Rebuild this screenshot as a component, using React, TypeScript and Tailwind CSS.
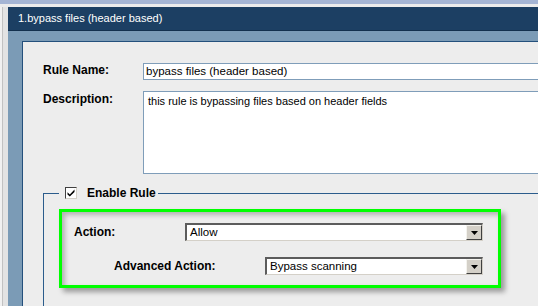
import React from 'react';

const font = "font-['Liberation_Sans',Arial,sans-serif]";

const DropArrow: React.FC = () => (
  <div className="flex h-full w-[16px] shrink-0 items-center justify-center border-t border-l border-b border-r border-t-[#f4f3ee] border-l-[#f4f3ee] border-b-[#404040] border-r-[#404040] bg-[#d4d0c8]">
    <svg width="7" height="4" viewBox="0 0 7 4">
      <path d="M0 0h7L3.5 4z" fill="#000" />
    </svg>
  </div>
);

const Combo: React.FC<{ value: string }> = ({ value }) => (
  <div className="flex h-[18px] flex-1 items-stretch border-t-2 border-l-2 border-b border-r border-t-[#5c5c5c] border-l-[#5c5c5c] border-b-[#d4d0c8] border-r-[#d4d0c8] bg-white">
    <div className="flex flex-1 items-center pl-[3px] text-[11.5px] leading-none text-black">{value}</div>
    <DropArrow />
  </div>
);

export default function App() {
  return (
    <div className={`flex h-[306px] w-[538px] flex-col overflow-hidden bg-[#ececec] ${font}`}>
      {/* top strip */}
      <div className="h-[4px] shrink-0 bg-[#a5b5d4]" />
      <div className="h-[3px] shrink-0 bg-[#ececec]" />

      <div className="flex min-h-0 flex-1">
        {/* left edge */}
        <div className="flex w-[8px] shrink-0 bg-[#e3e3e3]">
          <div className="w-[2px] bg-[#f1f1f1]" />
          <div className="w-px bg-[#c2c2c2]" />
        </div>

        <div className="flex min-w-0 flex-1 flex-col">
          {/* header */}
          <div className="flex h-[24px] shrink-0 items-center border-b border-[#13304d] bg-[#1c3f63] pl-[10px] text-[11px] text-white">
            1.bypass files (header based)
          </div>

          {/* steel frame */}
          <div className="flex min-h-0 flex-1 flex-col bg-[#7b9bb6] pl-[14px] pt-[10px]">
            <div className="min-h-0 flex-1 overflow-hidden border-t border-l border-[#24507c] bg-[#ededed] pl-[20px] pt-[21px]">
              {/* rule name */}
              <div className="flex items-start">
                <div className="w-[100px] shrink-0 text-[12px] font-bold leading-[14px] text-black">Rule Name:</div>
                <div className="flex h-[17px] w-[400px] shrink-0 items-center border border-[#7f9db9] bg-white pl-[2px] text-[11.5px] text-black">
                  bypass files (header based)
                </div>
              </div>

              {/* description */}
              <div className="mt-[11px] flex items-start">
                <div className="w-[100px] shrink-0 pt-[1px] text-[12px] font-bold leading-[14px] text-black">Description:</div>
                <div className="h-[83px] w-[400px] shrink-0 border border-[#7f9db9] bg-white pl-[4px] pt-[2px] text-[11px] leading-[14px] text-black">
                  this rule is bypassing files based on header fields
                </div>
              </div>

              {/* group box */}
              <fieldset className="mt-[12px] w-[520px] border-t border-l border-[#2b5c8c] pb-[40px]">
                <legend className="ml-[15px] flex h-[14px] items-center pl-[6px] pr-[2px]">
                  <div className="flex h-[12px] w-[12px] items-center justify-center border-t border-l border-b border-r border-t-[#404040] border-l-[#404040] border-b-[#d4d0c8] border-r-[#d4d0c8] bg-white">
                    <svg width="8" height="8" viewBox="0 0 8 8">
                      <path d="M0.5 3.2l2.3 2.2L7.5 0.6v2.4L2.8 7.6 0.5 5.4z" fill="#000" />
                    </svg>
                  </div>
                  <span className="ml-[10px] text-[12px] font-bold leading-[14px] text-black">Enable Rule</span>
                </legend>

                <div className="ml-[15px] mt-[9px] w-[442px] border-[3px] border-[#00ff00] pb-[10px] pl-[12px] pr-[15px] pt-[11px] shadow-[4px_4px_5px_rgba(0,0,0,0.35),inset_3px_3px_5px_rgba(0,0,0,0.25)]">
                  <div className="flex items-center">
                    <div className="w-[111px] shrink-0 text-[12px] font-bold text-black">Action:</div>
                    <Combo value="Allow" />
                  </div>
                  <div className="mt-[16px] flex items-center pl-[40px]">
                    <div className="w-[151px] shrink-0 text-[12px] font-bold text-black">Advanced Action:</div>
                    <Combo value="Bypass scanning" />
                  </div>
                </div>
              </fieldset>
            </div>
          </div>
        </div>
      </div>
    </div>
  );
}
